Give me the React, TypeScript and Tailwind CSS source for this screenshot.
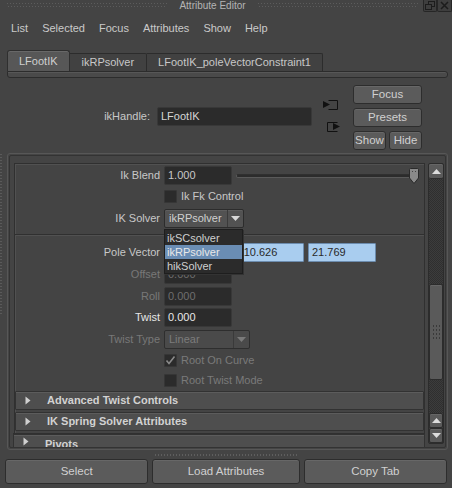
import React from "react";

const Tri = () => (
  <svg width="6" height="9" viewBox="0 0 6 9" className="shrink-0">
    <path d="M0.5 0.5 L5.5 4.5 L0.5 8.5 Z" fill="#d0d0d0" />
  </svg>
);

const DownArrow = ({ c = "#d8d8d8" }: { c?: string }) => (
  <svg width="9" height="5" viewBox="0 0 9 5">
    <path d="M0 0 L9 0 L4.5 5 Z" fill={c} />
  </svg>
);

const Field = ({ v, dim, white }: { v: string; dim?: boolean; white?: boolean }) => (
  <div className="w-[68px] h-[19px] bg-[#2b2b2b] border border-[#383838] rounded-[2px] pl-[3px] flex items-center">
    <span className={dim ? "text-[#6e6e6e]" : white ? "text-[#e8e8e8]" : "text-[#c8c8c8]"}>{v}</span>
  </div>
);

const Row = ({
  label,
  mt,
  dim,
  white,
  children,
}: {
  label: string;
  mt: string;
  dim?: boolean;
  white?: boolean;
  children: React.ReactNode;
}) => (
  <div className={"flex items-center h-[19px] " + mt}>
    <div
      className={
        "w-[149px] text-right pr-[4px] " +
        (dim ? "text-[#787878]" : white ? "text-[#e6e6e6]" : "text-[#c8c8c8]")
      }
    >
      {label}
    </div>
    {children}
  </div>
);

const Check = ({ label, checked, mt, dim }: { label: string; checked?: boolean; mt: string; dim?: boolean }) => (
  <div className={"flex items-center h-[17px] pl-[149px] " + mt}>
    <div className="w-[13px] h-[13px] bg-[#2b2b2b] border border-[#363636] rounded-[1px] flex items-center justify-center">
      {checked && (
        <svg width="11" height="11" viewBox="0 0 11 11">
          <path d="M1.5 5.5 L4 8.5 L9.5 1.5" stroke="#8a8a8a" strokeWidth="1.6" fill="none" />
        </svg>
      )}
    </div>
    <span className={"ml-[4px] " + (dim ? "text-[#7a7a7a]" : "text-[#c8c8c8]")}>{label}</span>
  </div>
);

const Header = ({ label, mt }: { label: string; mt: string }) => (
  <div
    className={
      "h-[19px] bg-[#4e4e4e] border border-[#323232] rounded-[1px] flex items-center pl-[9px] shadow-[inset_0_1px_0_#5c5c5c] " +
      mt
    }
  >
    <Tri />
    <span className="ml-[16px] font-bold text-[#d2d2d2]">{label}</span>
  </div>
);

const Btn = ({ label, cls }: { label: string; cls: string }) => (
  <div
    className={
      "bg-[#5b5b5b] border border-[#2d2d2d] rounded-[3px] flex items-center justify-center text-[#d0d0d0] shadow-[inset_0_1px_0_#676767] " +
      cls
    }
  >
    {label}
  </div>
);

const Dots = ({ cls }: { cls: string }) => (
  <div className={"flex flex-col gap-[2px] " + cls}>
    <div className="h-[1px] bg-[image:repeating-linear-gradient(90deg,#5c5c5c_0_1px,transparent_1px_3px)]" />
    <div className="h-[1px] ml-[1px] bg-[image:repeating-linear-gradient(90deg,#5c5c5c_0_1px,transparent_1px_3px)]" />
  </div>
);

export default function App() {
  return (
    <div className="w-[452px] h-[488px] bg-[#444444] relative overflow-hidden flex flex-col font-['Liberation_Sans',Arial,sans-serif] text-[11px] leading-none text-[#c8c8c8] select-none">
      {/* title bar */}
      <div className="h-[12px] flex items-start">
        <Dots cls="flex-1 ml-[7px] mt-[3px]" />
        <div className="px-[12px] text-[10px] text-[#b4b4b4] pt-[1px]">Attribute Editor</div>
        <Dots cls="flex-1 mt-[3px] mr-[5px]" />
        <div className="w-[14px] h-[12px] border border-[#262626] border-t-0 rounded-b-[2px] bg-[#3e3e3e] flex items-center justify-center">
          <svg width="10" height="9" viewBox="0 0 10 9">
            <rect x="3.5" y="0.5" width="6" height="5" fill="none" stroke="#1c1c1c" />
            <rect x="0.5" y="3.5" width="6" height="5" fill="#3e3e3e" stroke="#1c1c1c" />
          </svg>
        </div>
        <div className="w-[15px] h-[12px] border border-[#262626] border-t-0 rounded-b-[2px] bg-[#3e3e3e] flex items-center justify-center">
          <svg width="9" height="9" viewBox="0 0 9 9">
            <path d="M1 1 L8 8 M8 1 L1 8" stroke="#1c1c1c" strokeWidth="1.5" />
          </svg>
        </div>
      </div>

      {/* menu bar */}
      <div className="h-[32px] flex items-center pl-[11px] gap-[14px] text-[11px] text-[#cacaca]">
        <span>List</span>
        <span>Selected</span>
        <span>Focus</span>
        <span>Attributes</span>
        <span>Show</span>
        <span>Help</span>
      </div>

      {/* tabs */}
      <div className="pt-[7px] px-[7px] flex flex-col">
        <div className="flex items-end h-[20px]">
          <div className="h-[21px] px-[11px] bg-[#575757] border border-[#2f2f2f] border-b-0 rounded-t-[3px] flex items-center text-[#d0d0d0] shadow-[inset_0_1px_0_#686868] relative z-10">
            LFootIK
          </div>
          <div className="h-[18px] px-[12px] bg-[#414141] border border-[#2c2c2c] border-b-0 border-l-0 rounded-tr-[2px] flex items-center text-[#c8c8c8]">
            ikRPsolver
          </div>
          <div className="h-[18px] px-[11px] bg-[#414141] border border-[#2c2c2c] border-b-0 border-l-0 rounded-tr-[2px] flex items-center text-[#c8c8c8]">
            LFootIK_poleVectorConstraint1
          </div>
        </div>
        <div className="h-[7px] w-[441px] bg-[#4a4a4a] border border-[#2c2c2c] rounded-b-[3px] rounded-tr-[3px] shadow-[inset_0_1px_0_#575757]" />
      </div>

      {/* ikHandle area */}
      <div className="h-[74px] flex pt-[7px]">
        <div className="flex items-center h-[62px]">
          <div className="w-[150px] text-right text-[#c8c8c8]">ikHandle:</div>
          <div className="ml-[7px] w-[155px] h-[19px] bg-[#2b2b2b] border border-[#383838] rounded-[2px] flex items-center pl-[3px] text-[#d6d6d6]">
            LFootIK
          </div>
        </div>
        <div className="ml-[11px] w-[20px] flex flex-col pt-[13px]">
          <svg width="16" height="13" viewBox="0 0 16 13">
            <path d="M5.5 2.5 H14.5 V11.5 H5.5" fill="none" stroke="#111" />
            <path d="M0 3 L7 6.5 L0 10 Z" fill="#111" />
          </svg>
          <svg width="18" height="13" viewBox="0 0 18 13" className="mt-[9px] ml-[3px]">
            <path d="M11.5 2.5 H1.5 V11.5 H11.5" fill="none" stroke="#111" />
            <path d="M7 3 L14 6.5 L7 10 Z" fill="#111" />
          </svg>
        </div>
        <div className="ml-[10px] w-[69px] flex flex-col gap-[4px] text-[11.5px]">
          <Btn label="Focus" cls="h-[19px] w-[69px]" />
          <Btn label="Presets" cls="h-[19px] w-[69px]" />
          <div className="flex gap-[3px]">
            <Btn label="Show" cls="h-[19px] w-[33px]" />
            <Btn label="Hide" cls="h-[19px] w-[33px]" />
          </div>
        </div>
      </div>

      {/* main frame */}
      <div className="flex h-[298px]">
        <div className="w-[7px] pt-[2px] flex flex-col gap-[2px]">
          {Array.from({ length: 54 }).map((_, i) => (
            <div key={i} className="w-[2px] h-[1px] bg-[#5a5a5a]" />
          ))}
        </div>
        <div className="w-[441px] h-[297px] mt-[1px] border border-[#575757] rounded-[3px] p-[1px]">
          <div className="h-full border border-[#333333] rounded-[2px] flex pl-[3px] pt-[3px] pr-[1px]">
            {/* viewport */}
            <div className="w-[412px] h-full overflow-hidden flex flex-col">
              <div className="mt-[4px] border border-[#303030] border-b-0 ml-[1px] shadow-[inset_1px_1px_0_#515151]">
                <div className="pt-[2px]">
                  <Row label="Ik Blend" mt="">
                    <Field v="1.000" />
                    <div className="ml-[4px] flex items-center w-[186px] relative h-[19px]">
                      <div className="w-[177px] h-[4px] bg-[#2c2c2c] border border-[#5a5a5a] border-t-[#303030] rounded-[2px]" />
                      <svg width="10" height="16" viewBox="0 0 10 16" className="ml-[-4px]">
                        <path d="M0.5 1.5 Q0.5 0.5 1.5 0.5 H8.5 Q9.5 0.5 9.5 1.5 V10 L5 15.5 L0.5 10 Z" fill="#8a8a8a" stroke="#2a2a2a" />
                        <rect x="3" y="3" width="1" height="1" fill="#444" />
                        <rect x="6" y="3" width="1" height="1" fill="#444" />
                      </svg>
                    </div>
                  </Row>
                  <Check label="Ik Fk Control" mt="mt-[3px]" />
                  <Row label="IK Solver" mt="mt-[4px]">
                    <div className="w-[80px] h-[19px] bg-[#525252] border border-[#2c2c2c] rounded-[2px] flex items-center shadow-[inset_0_1px_0_#5e5e5e]">
                      <span className="flex-1 pl-[4px] text-[#d0d0d0]">ikRPsolver</span>
                      <div className="w-[16px] h-full border-l border-[#3a3a3a] flex items-center justify-center">
                        <DownArrow />
                      </div>
                    </div>
                  </Row>
                  <div className="mt-[6px] border-t border-[#303030] shadow-[inset_0_1px_0_#515151] pt-[8px]">
                    <Row label="Pole Vector" mt="">
                      <div className="flex gap-[4px]">
                        {["2.305", "-10.626", "21.769"].map((v) => (
                          <div
                            key={v}
                            className="w-[68px] h-[19px] bg-[#a9cdef] border border-[#6c8cae] rounded-[1px] pl-[3px] flex items-center text-[#2a2a2a]"
                          >
                            {v}
                          </div>
                        ))}
                      </div>
                    </Row>
                    <Row label="Offset" mt="mt-[3px]" dim>
                      <Field v="0.000" dim />
                    </Row>
                    <Row label="Roll" mt="mt-[3px]" dim>
                      <Field v="0.000" dim />
                    </Row>
                    <Row label="Twist" mt="mt-[2px]" white>
                      <Field v="0.000" white />
                    </Row>
                    <Row label="Twist Type" mt="mt-[3px]" dim>
                      <div className="w-[86px] h-[19px] bg-[#4a4a4a] border border-[#2e2e2e] rounded-[2px] flex items-center">
                        <span className="flex-1 pl-[4px] text-[#7c7c7c]">Linear</span>
                        <div className="w-[16px] h-full border-l border-[#3a3a3a] flex items-center justify-center">
                          <DownArrow c="#7a7a7a" />
                        </div>
                      </div>
                    </Row>
                    <Check label="Root On Curve" checked dim mt="mt-[3px]" />
                    <Check label="Root Twist Mode" dim mt="mt-[3px]" />
                    <Header label="Advanced Twist Controls" mt="mt-[2px]" />
                    <Header label="IK Spring Solver Attributes" mt="mt-[2px]" />
                    <div className="h-[2px]" />
                  </div>
                </div>
              </div>
              <div className="h-[2px] border-t border-[#303030]" />
              <div className="h-[14px] bg-[#4e4e4e] border border-[#323232] border-b-0 flex items-center pl-[9px] shadow-[inset_0_1px_0_#5c5c5c]">
                <Tri />
                <span className="ml-[16px] font-bold text-[#d2d2d2] mt-[6px]">Pivots</span>
              </div>
            </div>
            {/* scrollbar */}
            <div className="ml-[3px] w-[16px] mt-[4px] h-[281px] flex flex-col border border-[#2c2c2c] rounded-[2px] bg-[image:repeating-conic-gradient(#2f2f2f_0_25%,#3c3c3c_0_50%)] bg-[length:2px_2px]">
              <div className="h-[15px] bg-[#5a5a5a] border-b border-[#2c2c2c] rounded-[2px] flex items-center justify-center shadow-[inset_0_1px_0_#666]">
                <svg width="9" height="5" viewBox="0 0 9 5">
                  <path d="M0 5 L9 5 L4.5 0 Z" fill="#dcdcdc" />
                </svg>
              </div>
              <div className="h-[105px]" />
              <div className="h-[96px] bg-[#5a5a5a] border border-[#2c2c2c] rounded-[2px] flex items-center justify-center shadow-[inset_0_1px_0_#666]">
                <div className="grid grid-cols-3 gap-[2px]">
                  {Array.from({ length: 12 }).map((_, i) => (
                    <div key={i} className="w-[1px] h-[2px] bg-[#3a3a3a]" />
                  ))}
                </div>
              </div>
              <div className="flex-1" />
              <div className="h-[15px] bg-[#5a5a5a] border border-[#2c2c2c] rounded-[2px] flex items-center justify-center shadow-[inset_0_1px_0_#666]">
                <svg width="9" height="5" viewBox="0 0 9 5">
                  <path d="M0 5 L9 5 L4.5 0 Z" fill="#dcdcdc" />
                </svg>
              </div>
              <div className="h-[15px] bg-[#5a5a5a] border border-[#2c2c2c] rounded-[2px] flex items-center justify-center shadow-[inset_0_1px_0_#666]">
                <DownArrow c="#dcdcdc" />
              </div>
            </div>
          </div>
        </div>
      </div>

      {/* drag handle */}
      <div className="h-[9px] flex items-center justify-center">
        <div className="w-[143px] h-[2px] bg-[image:repeating-linear-gradient(90deg,#5e5e5e_0_1px,transparent_1px_3px)]" />
      </div>

      {/* bottom buttons */}
      <div className="flex px-[5px] gap-[4px] text-[11.5px]">
        <Btn label="Select" cls="w-[144px] h-[25px]" />
        <Btn label="Load Attributes" cls="w-[148px] h-[25px]" />
        <Btn label="Copy Tab" cls="w-[144px] h-[25px]" />
      </div>

      {/* open dropdown list (overlay) */}
      <div className="absolute left-[164px] top-[229px] w-[79px] h-[45px] bg-[#2b2b2b] border border-[#1e1e1e] shadow-[1px_1px_0_#333] flex flex-col pt-[1px] text-[#cfcfcf]">
        <div className="h-[14px] flex items-center pl-[2px]">ikSCsolver</div>
        <div className="h-[14px] flex items-center pl-[2px] bg-[#6a8db4] text-[#e8e8e8]">ikRPsolver</div>
        <div className="h-[14px] flex items-center pl-[2px]">hikSolver</div>
      </div>
    </div>
  );
}
